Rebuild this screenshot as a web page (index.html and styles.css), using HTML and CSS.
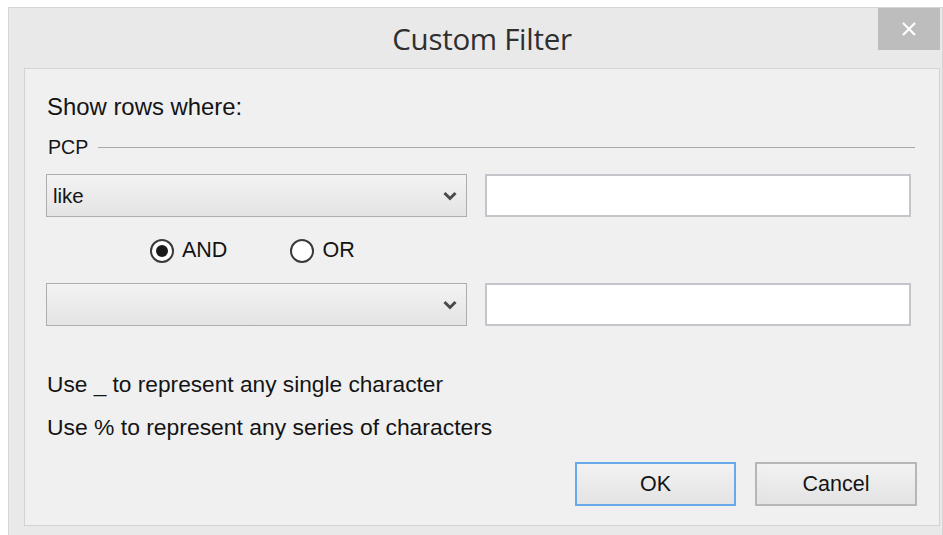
FILE: index.html
```html
<!DOCTYPE html>
<html lang="en">
<head>
<meta charset="utf-8">
<title>Custom Filter</title>
<link rel="stylesheet" href="styles.css">
</head>
<body>
<div class="window">
  <div class="titlebar">
    <span class="titlebar-spacer"></span>
    <h1 class="title">Custom Filter</h1>
    <button class="close-btn" type="button" aria-label="Close">
      <svg width="16" height="16" viewBox="0 0 16 16"><path d="M2 2 L14 14 M14 2 L2 14" stroke="#fff" stroke-width="2.2" fill="none"/></svg>
    </button>
  </div>

  <div class="panel">
    <p class="lead">Show rows where:</p>

    <div class="group-label">
      <span>PCP</span>
      <span class="group-rule"></span>
    </div>

    <div class="cond-row">
      <div class="combo">
        <span class="combo-value">like</span>
        <svg class="chevron" width="14" height="10" viewBox="0 0 14 10"><path d="M1.5 2 L7 7.5 L12.5 2" stroke="#4a4a4a" stroke-width="3" fill="none"/></svg>
      </div>
      <div class="text-box"></div>
    </div>

    <div class="radio-row">
      <label class="radio">
        <span class="radio-dot checked"></span>
        <span>AND</span>
      </label>
      <label class="radio">
        <span class="radio-dot"></span>
        <span>OR</span>
      </label>
    </div>

    <div class="cond-row">
      <div class="combo">
        <span class="combo-value"></span>
        <svg class="chevron" width="14" height="10" viewBox="0 0 14 10"><path d="M1.5 2 L7 7.5 L12.5 2" stroke="#4a4a4a" stroke-width="3" fill="none"/></svg>
      </div>
      <div class="text-box"></div>
    </div>

    <p class="hint first">Use _ to represent any single character</p>
    <p class="hint second">Use % to represent any series of characters</p>

    <div class="actions">
      <button class="btn btn-default" type="button">OK</button>
      <button class="btn" type="button">Cancel</button>
    </div>
  </div>
</div>
</body>
</html>
```

FILE: styles.css
```css
html, body {
  margin: 0;
  padding: 0;
  background: #ffffff;
  overflow: hidden;
}

body {
  padding: 7px 0 0 8px;
  font-family: "Liberation Sans", Arial, sans-serif;
  font-size: 22.5px;
  color: #141414;
}

.window {
  width: 935px;
  box-sizing: border-box;
  height: 540px;
  background: #e9e9e9;
  border: 1px solid #d6d6d6;
}

.titlebar {
  display: grid;
  grid-template-columns: 62px 1fr 62px;
  height: 60px;
  padding: 0 2px 0 15px;
}

.title {
  margin: 0;
  text-align: center;
  font-family: "Open Sans", "Noto Sans", sans-serif;
  font-weight: 400;
  font-size: 29.5px;
  line-height: 40px;
  padding-top: 11px;
  letter-spacing: -0.3px;
  color: #2f2f2f;
}

.close-btn {
  width: 62px;
  height: 42px;
  border: 0;
  padding: 0;
  background: #bdbdbd;
  display: flex;
  align-items: center;
  justify-content: center;
}

.panel {
  margin: 0 2px 0 15px;
  background: #f0f0f0;
  border: 1px solid #d3d3d3;
  padding: 24px 22px 19px 22px;
}

.lead,
.hint {
  margin: 0;
  line-height: 28px;
}

.lead {
  font-size: 23.9px;
}

.group-label {
  display: flex;
  align-items: center;
  gap: 10px;
  margin-top: 12px;
  line-height: 28px;
  padding-left: 1px;
  font-size: 19.6px;
}

.group-rule {
  flex: 1;
  height: 1px;
  background: #a9a9a9;
  margin-right: 2px;
}

.cond-row {
  display: grid;
  grid-template-columns: 421px 1fr;
  column-gap: 18px;
  height: 43px;
  margin: 13px 6px 0 -1px;
}

.cond-row + .radio-row + .cond-row {
  margin-top: 0;
}

.combo {
  box-sizing: border-box;
  display: flex;
  align-items: center;
  justify-content: space-between;
  padding: 0 9px 0 6px;
  border: 1px solid #adadad;
  background: linear-gradient(#f3f3f3, #e4e4e4);
  font-size: 20.5px;
}

.chevron {
  display: block;
}

.text-box {
  box-sizing: border-box;
  background: #ffffff;
  border: 2px solid #c4c4ca;
}

.radio-row {
  display: flex;
  align-items: center;
  height: 66px;
  padding-left: 103px;
  gap: 63px;
  font-size: 21.5px;
  box-sizing: border-box;
  padding-top: 1px;
}

.radio {
  display: flex;
  align-items: center;
  gap: 8px;
}

.radio-dot {
  width: 24px;
  height: 24px;
  box-sizing: border-box;
  border-radius: 50%;
  border: 2px solid #3a3a3a;
  background: #ffffff;
  display: flex;
  align-items: center;
  justify-content: center;
}

.radio-dot.checked::after {
  content: "";
  width: 12px;
  height: 12px;
  border-radius: 50%;
  background: #1a1a1a;
}

.hint.first {
  margin-top: 44px;
  font-size: 22.7px;
}

.hint.second {
  margin-top: 15px;
  font-size: 22.9px;
}

.actions {
  display: flex;
  justify-content: flex-end;
  gap: 19px;
  margin-top: 21px;
}

.btn {
  width: 162px;
  height: 44px;
  box-sizing: border-box;
  border: 2px solid #b6b6b6;
  background: linear-gradient(#f2f2f2, #e3e3e3);
  font-family: "Liberation Sans", Arial, sans-serif;
  font-size: 21.5px;
  color: #141414;
  padding: 0;
}

.btn-default {
  width: 161px;
  border-color: #69a9ea;
}
```
